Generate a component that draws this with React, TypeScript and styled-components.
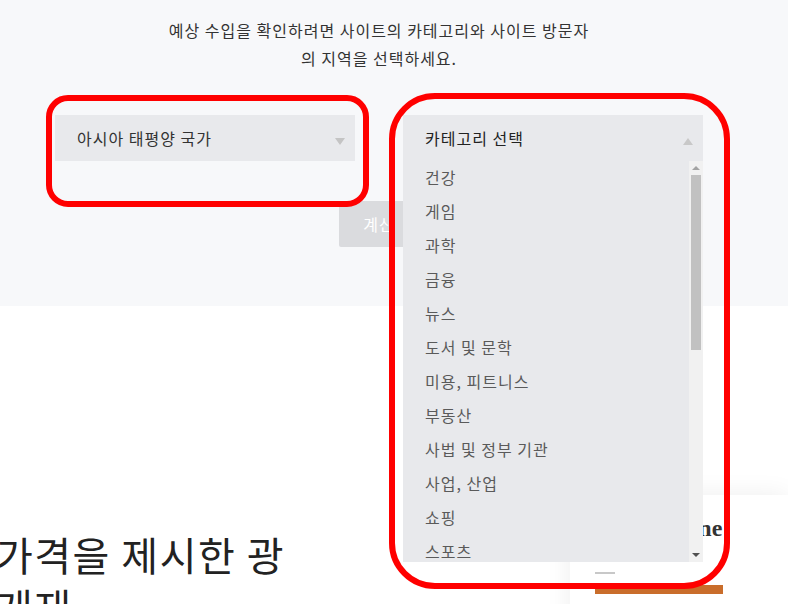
import styled, { createGlobalStyle } from "styled-components";

const GlobalStyle = createGlobalStyle`
  html, body {
    margin: 0;
    padding: 0;
    background: #ffffff;
    overflow: hidden;
  }
  body {
    font-family: "Noto Sans CJK KR", "Noto Sans", sans-serif;
    color: #222;
  }
`;

const Page = styled.div`
  position: relative;
  width: 788px;
  height: 604px;
  overflow: hidden;
`;

const Hero = styled.section`
  box-sizing: border-box;
  height: 306px;
  padding: 16px 30px 0 0;
  background-color: #f7f8fa;
  display: flex;
  flex-direction: column;
  align-items: center;
`;

const Lead = styled.p`
  margin: 0;
  font-size: 16px;
  line-height: 28px;
  letter-spacing: 1px;
  color: #333;
  text-align: center;
`;

const Controls = styled.div`
  display: flex;
  gap: 48px;
  margin-top: 43px;
`;

const Select = styled.div<{ dark?: boolean }>`
  position: relative;
  box-sizing: border-box;
  width: 300px;
  height: 46px;
  padding: 0 22px;
  display: flex;
  align-items: center;
  justify-content: space-between;
  background-color: #e8e9ec;
  font-size: 16px;
  letter-spacing: 1px;
  color: ${(props) => (props.dark ? "#222" : "#333")};
`;

const Caret = styled.span<{ up?: boolean }>`
  width: 0;
  height: 0;
  margin-right: -12px;
  margin-top: 6px;
  border-left: 5px solid transparent;
  border-right: 5px solid transparent;
  ${(props) =>
    props.up
      ? "border-bottom: 7px solid #c8c8c8;"
      : "border-top: 7px solid #c4c4c4;"}
`;

const Menu = styled.div`
  position: absolute;
  top: 46px;
  left: 0;
  width: 300px;
  height: 401px;
  display: flex;
  background-color: #e8e9ec;
  z-index: 2;
`;

const MenuList = styled.ul`
  flex: 1;
  margin: -1px 0 0;
  padding: 0;
  list-style: none;
  overflow: hidden;
`;

const MenuItem = styled.li`
  height: 34px;
  padding-left: 22px;
  line-height: 34px;
  font-size: 16px;
  letter-spacing: 1px;
  color: #5a5a5a;
  white-space: nowrap;
`;

const ScrollTrack = styled.div`
  width: 14px;
  display: flex;
  flex-direction: column;
  align-items: center;
  background-color: #f1f1f1;
`;

const ScrollButton = styled.div`
  width: 14px;
  height: 14px;
  display: flex;
  align-items: center;
  justify-content: center;
`;

const Arrow = styled.span<{ up?: boolean }>`
  width: 0;
  height: 0;
  border-left: 4px solid transparent;
  border-right: 4px solid transparent;
  ${(props) =>
    props.up
      ? "border-bottom: 4px solid #a3a3a3;"
      : "border-top: 4px solid #505050;"}
`;

const Thumb = styled.div`
  width: 10px;
  height: 175px;
  background-color: #c1c1c1;
`;

const Spacer = styled.div`
  flex: 1;
`;

const CalcButton = styled.button`
  margin-top: 40px;
  width: 80px;
  height: 46px;
  border: none;
  border-radius: 2px;
  background-color: #dadbde;
  color: #ffffff;
  font-family: inherit;
  font-size: 16px;
  letter-spacing: 1px;
`;

const Below = styled.section`
  display: flex;
  align-items: flex-start;
`;

const Heading = styled.h2`
  flex: 0 0 574px;
  margin: 222px 0 0 -4px;
  font-size: 40px;
  font-weight: 400;
  line-height: 52px;
  letter-spacing: 1.5px;
  color: #222;
  white-space: nowrap;
`;

const Card = styled.div`
  flex: 1;
  height: 200px;
  margin-top: 189px;
  padding: 18px 0 0 25px;
  background-color: #ffffff;
  box-shadow: 0 0 24px rgba(0, 0, 0, 0.07);
`;

const CardTitle = styled.h3`
  margin: 0;
  font-family: "Liberation Serif", "DejaVu Serif", serif;
  font-size: 24px;
  font-weight: 700;
  line-height: 30px;
  color: #333;
  white-space: nowrap;
`;

const Dash = styled.div`
  width: 20px;
  height: 2px;
  margin-top: 29px;
  background-color: #c8c8c8;
`;

const Bar = styled.div`
  width: 128px;
  height: 9px;
  margin-top: 11px;
  background-color: #c96d2b;
`;

const Highlight = styled.div<{ radius: number }>`
  position: absolute;
  box-sizing: border-box;
  border: 6px solid #ff0000;
  border-radius: ${(props) => props.radius}px;
  pointer-events: none;
  z-index: 5;
`;

const categories = [
  "건강",
  "게임",
  "과학",
  "금융",
  "뉴스",
  "도서 및 문학",
  "미용, 피트니스",
  "부동산",
  "사법 및 정부 기관",
  "사업, 산업",
  "쇼핑",
  "스포츠",
  "애완동물",
];

export default function App() {
  return (
    <Page>
      <GlobalStyle />
      <Hero>
        <Lead>
          예상 수입을 확인하려면 사이트의 카테고리와 사이트 방문자
          <br />의 지역을 선택하세요.
        </Lead>
        <Controls>
          <Select>
            <span>아시아 태평양 국가</span>
            <Caret />
          </Select>
          <Select dark>
            <span>카테고리 선택</span>
            <Caret up />
            <Menu>
              <MenuList>
                {categories.map((c) => (
                  <MenuItem key={c}>{c}</MenuItem>
                ))}
              </MenuList>
              <ScrollTrack>
                <ScrollButton>
                  <Arrow up />
                </ScrollButton>
                <Thumb />
                <Spacer />
                <ScrollButton>
                  <Arrow />
                </ScrollButton>
              </ScrollTrack>
            </Menu>
          </Select>
        </Controls>
        <CalcButton>계산</CalcButton>
      </Hero>
      <Below>
        <Heading>
          가격을 제시한 광
          <br />
          게재
        </Heading>
        <Card>
          <CardTitle>Earn Online</CardTitle>
          <Dash />
          <Bar />
        </Card>
      </Below>
      <Highlight radius={22} style={{ left: 46, top: 95, width: 323, height: 112 }} />
      <Highlight radius={46} style={{ left: 389, top: 93, width: 341, height: 496 }} />
    </Page>
  );
}
